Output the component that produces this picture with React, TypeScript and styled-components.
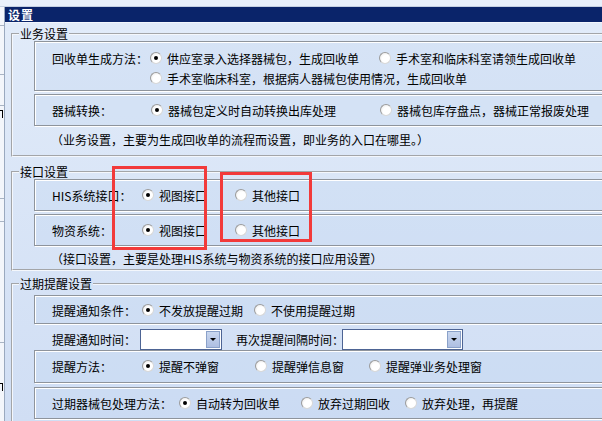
import styled, { createGlobalStyle } from "styled-components";

const GlobalStyle = createGlobalStyle`
  html, body {
    margin: 0;
    padding: 0;
  }

  body {
    font-family: "Noto Sans CJK SC", "Liberation Sans", sans-serif;
    font-size: 12px;
    color: #000;
    overflow: hidden;
  }
`;

export default function App() {
  return (
    <>
      <GlobalStyle />
      <Screen>
        <TopStrip />
        <Main>
          <SideStrip>
            <SideLine $top={18} />
            <SideLine $top={48} />
            <SideLine $top={30} />
            <SideMark $top={4} />
            <SideLine $top={80} />
            <SideLine $top={22} />
            <SideLine $top={120} />
            <SideMark $top={40} />
          </SideStrip>
          <Window>
            <TitleBar>设置</TitleBar>
            <Body>
              {/* 业务设置 */}
              <Group $pb={5}>
                <Legend>业务设置</Legend>
                <Inner>
                  <Panel $pt={6} $pb={2}>
                    <Row>
                      <Label $w={98}>回收单生成方法：</Label>
                      <Option $w={229}>
                        <Radio $checked />
                        供应室录入选择器械包，生成回收单
                      </Option>
                      <Option>
                        <Radio />
                        手术室和临床科室请领生成回收单
                      </Option>
                    </Row>
                    <Row>
                      <Label $w={98} />
                      <Option>
                        <Radio />
                        手术室临床科室，根据病人器械包使用情况，生成回收单
                      </Option>
                    </Row>
                  </Panel>
                  <Panel $mt={3} $pt={5} $pb={5}>
                    <Row>
                      <Label $w={99}>器械转换：</Label>
                      <Option $w={229}>
                        <Radio $checked />
                        器械包定义时自动转换出库处理
                      </Option>
                      <Option>
                        <Radio />
                        器械包库存盘点，器械正常报废处理
                      </Option>
                    </Row>
                  </Panel>
                  <Note $mt={4}>（业务设置，主要为生成回收单的流程而设置，即业务的入口在哪里。）</Note>
                </Inner>
              </Group>

              {/* 接口设置 */}
              <Group $mt={8} $pb={0}>
                <Legend>接口设置</Legend>
                <Inner>
                  <Panel $pt={5} $pb={5}>
                    <Row>
                      <Label $w={90}>HIS系统接口：</Label>
                      <Option $w={93}>
                        <Radio $checked />
                        视图接口
                      </Option>
                      <Option>
                        <Radio />
                        其他接口
                      </Option>
                    </Row>
                  </Panel>
                  <Panel $mt={3} $pt={5} $pb={5}>
                    <Row>
                      <Label $w={90}>物资系统：</Label>
                      <Option $w={93}>
                        <Radio $checked />
                        视图接口
                      </Option>
                      <Option>
                        <Radio />
                        其他接口
                      </Option>
                    </Row>
                  </Panel>
                  <Note $mt={3}>（接口设置，主要是处理HIS系统与物资系统的接口应用设置）</Note>
                </Inner>
              </Group>

              {/* 过期提醒设置 */}
              <Group $mt={6} $pb={6}>
                <Legend>过期提醒设置</Legend>
                <Inner>
                  <Panel $mt={4} $pt={4} $pb={3}>
                    <Row>
                      <Label $w={90}>提醒通知条件：</Label>
                      <Option $w={112}>
                        <Radio $checked />
                        不发放提醒过期
                      </Option>
                      <Option>
                        <Radio />
                        不使用提醒过期
                      </Option>
                    </Row>
                  </Panel>
                  <ComboRow>
                    <Label $w={88}>提醒通知时间：</Label>
                    <Combo $w={82}>
                      <ComboButton />
                    </Combo>
                    <ComboLabel>再次提醒间隔时间：</ComboLabel>
                    <Combo $w={121}>
                      <ComboButton />
                    </Combo>
                  </ComboRow>
                  <Panel $pt={5} $pb={6}>
                    <Row>
                      <Label $w={90}>提醒方法：</Label>
                      <Option $w={113}>
                        <Radio $checked />
                        提醒不弹窗
                      </Option>
                      <Option $w={114}>
                        <Radio />
                        提醒弹信息窗
                      </Option>
                      <Option>
                        <Radio />
                        提醒弹业务处理窗
                      </Option>
                    </Row>
                  </Panel>
                  <Panel $mt={4} $pt={5} $pb={5}>
                    <Row>
                      <Label $w={127}>过期器械包处理方法：</Label>
                      <Option $w={122}>
                        <Radio $checked />
                        自动转为回收单
                      </Option>
                      <Option $w={104}>
                        <Radio />
                        放弃过期回收
                      </Option>
                      <Option>
                        <Radio />
                        放弃处理，再提醒
                      </Option>
                    </Row>
                  </Panel>
                </Inner>
              </Group>
            </Body>
          </Window>
        </Main>

        {/* 红框标注 */}
        <Highlight $x={112} $y={166} $w={95} $h={84} />
        <Highlight $x={220} $y={172} $w={92} $h={70} />
      </Screen>
    </>
  );
}

const Screen = styled.div`
  position: relative;

  display: flex;
  flex-direction: column;

  width: 602px;
  height: 421px;

  overflow: hidden;
  background-color: #e6eefa;
`;

const TopStrip = styled.div`
  flex: none;

  height: 6px;

  background-color: #e8f0fb;
  border-bottom: 1px solid #c4d0e2;
`;

const Main = styled.div`
  display: flex;
  flex: 1;

  min-height: 0;
`;

const SideStrip = styled.div`
  display: flex;
  flex-direction: column;
  flex: none;

  width: 4px;

  background-color: #f3f6fb;
  border-right: 1px solid #9aa9bf;
  overflow: hidden;
`;

const SideLine = styled.div<{ $top: number }>`
  flex: none;

  margin-top: ${(p) => p.$top}px;
  height: 1px;

  background-color: #a9b4c4;
`;

const SideMark = styled.div<{ $top: number }>`
  flex: none;

  width: 3px;
  height: 8px;
  margin-top: ${(p) => p.$top}px;

  border-top: 1px solid #000;
  border-right: 1px solid #000;
  box-sizing: border-box;
`;

const Window = styled.div`
  display: flex;
  flex-direction: column;
  flex: 1;

  min-width: 0;
`;

const TitleBar = styled.div`
  flex: none;

  height: 15px;
  padding-left: 3px;

  background-color: #0a246a;

  color: #fff;
  font-size: 12px;
  font-weight: 700;
  line-height: 15px;
  letter-spacing: 1px;
`;

const Body = styled.div`
  flex: 1;

  padding: 4px 0 0 6px;

  background: linear-gradient(#e1ebf9, #d0def4);
  border-top: 1px solid #f2f6fd;
  overflow: hidden;
`;

const Group = styled.fieldset<{ $mt?: number; $pb: number }>`
  width: 660px;
  margin: ${(p) => p.$mt ?? 0}px 0 0 0;
  padding: 0 0 ${(p) => p.$pb}px 6px;

  border: 2px groove #f4f7fc;
  box-sizing: border-box;
`;

const Legend = styled.legend`
  padding: 0 1px;

  line-height: 14px;
`;

const Inner = styled.div`
  display: flex;
  flex-direction: column;

  margin-left: 15px;
`;

const Panel = styled.div<{ $mt?: number; $pt: number; $pb: number }>`
  display: flex;
  flex-direction: column;

  margin-top: ${(p) => p.$mt ?? 0}px;
  padding: ${(p) => p.$pt}px 0 ${(p) => p.$pb}px 17px;

  background-color: rgba(196, 216, 240, 0.35);
  border: 1px solid #8e949c;
  box-shadow: inset 1px 1px 0 #fff, 1px 1px 0 #fff;
`;

const Row = styled.div`
  display: flex;
  align-items: center;

  height: 20px;

  white-space: nowrap;
`;

const Label = styled.span<{ $w: number }>`
  flex: none;

  width: ${(p) => p.$w}px;
`;

const Option = styled.label<{ $w?: number }>`
  display: inline-flex;
  align-items: center;
  flex: none;
  gap: 5px;

  width: ${(p) => (p.$w ? `${p.$w}px` : "auto")};
`;

const Radio = styled.span<{ $checked?: boolean }>`
  display: inline-flex;
  align-items: center;
  justify-content: center;
  flex: none;

  width: 12px;
  height: 12px;
  box-sizing: border-box;

  border-radius: 50%;
  border: 1px solid #9c9c9c;
  border-right-color: #d8d8d8;
  border-bottom-color: #d8d8d8;
  background: radial-gradient(circle at 60% 60%, #fff 45%, #e2e2e2 100%);

  &::after {
    content: "";

    width: 4px;
    height: 4px;

    border-radius: 50%;
    background-color: ${(p) => (p.$checked ? "#000" : "transparent")};
  }
`;

const Note = styled.div<{ $mt?: number }>`
  height: 20px;
  margin-top: ${(p) => p.$mt ?? 0}px;
  padding-left: 17px;

  line-height: 20px;
  white-space: nowrap;
`;

const ComboRow = styled.div`
  display: flex;
  align-items: center;

  height: 21px;
  margin-top: 5px;
  padding-left: 18px;

  white-space: nowrap;
`;

const ComboLabel = styled.span`
  margin-left: 14px;
  margin-right: -2px;
`;

const Combo = styled.div<{ $w: number }>`
  display: flex;
  align-items: center;
  justify-content: flex-end;
  flex: none;

  width: ${(p) => p.$w}px;
  height: 21px;
  padding-right: 1px;
  box-sizing: border-box;

  background-color: #fff;
  border: 1px solid #4d6494;
`;

const ComboButton = styled.span`
  display: flex;
  align-items: center;
  justify-content: center;

  width: 14px;
  height: 17px;
  box-sizing: border-box;

  background: linear-gradient(#c9d7ef, #aebfe2);
  border: 1px solid #8aa1c9;

  &::after {
    content: "";

    border-left: 3px solid transparent;
    border-right: 3px solid transparent;
    border-top: 3px solid #000;
  }
`;

const Highlight = styled.div<{ $x: number; $y: number; $w: number; $h: number }>`
  position: absolute;
  left: ${(p) => p.$x}px;
  top: ${(p) => p.$y}px;

  width: ${(p) => p.$w}px;
  height: ${(p) => p.$h}px;
  box-sizing: border-box;

  border: 3px solid #f23a3a;
  pointer-events: none;
`;
